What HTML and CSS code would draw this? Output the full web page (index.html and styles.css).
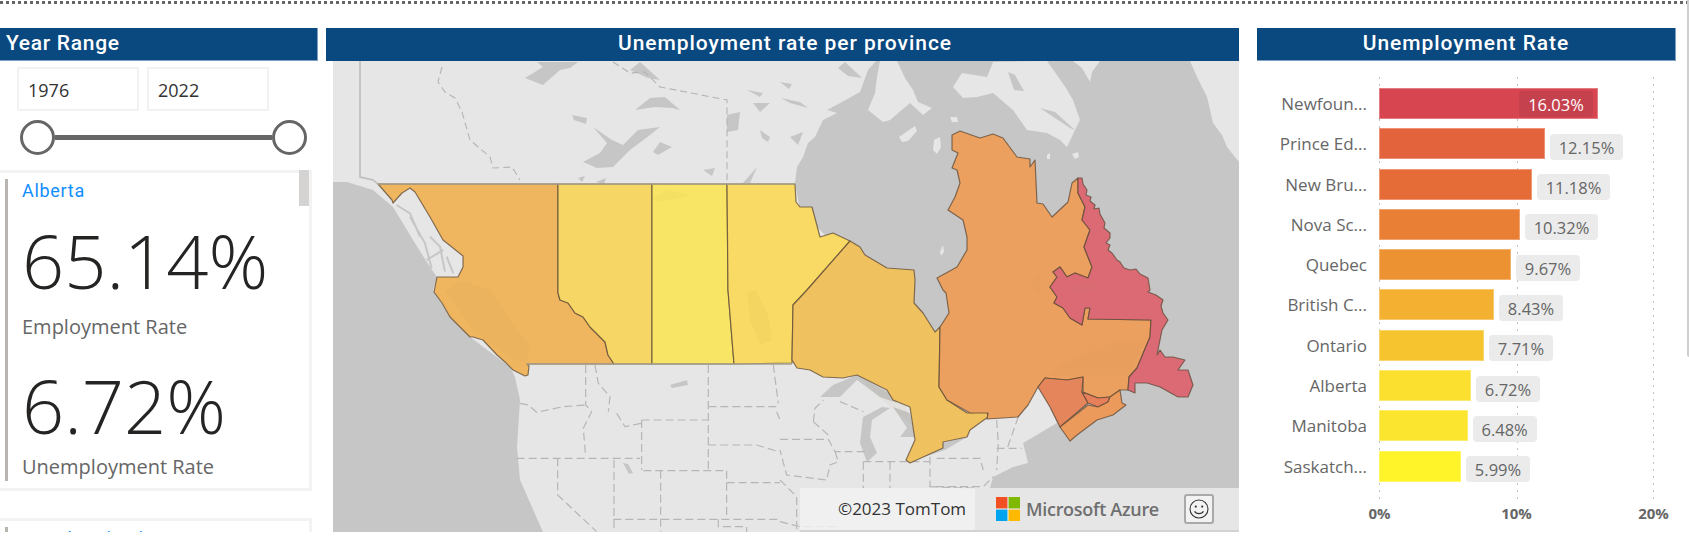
FILE: index.html
```html
<!DOCTYPE html>
<html lang="en">
<head>
<meta charset="utf-8">
<title>Unemployment dashboard</title>
<link rel="stylesheet" href="styles.css">
</head>
<body>
<div class="dots"></div>
<div class="page-scroll"></div>
<main class="dash">
  <section class="left">
    <h2 class="head head-left">Year Range</h2>
    <div class="inputs">
      <div class="yearbox">1976</div>
      <div class="yearbox">2022</div>
    </div>
    <div class="slider">
      <span class="knob"></span><span class="track"></span><span class="knob"></span>
    </div>
    <div class="cards">
      <article class="card">
        <div class="thumb"></div>
        <div class="card-in">
          <div class="prov">Alberta</div>
          <div class="big big-first">65.14%</div>
          <div class="cap">Employment Rate</div>
          <div class="big big-second">6.72%</div>
          <div class="cap">Unemployment Rate</div>
        </div>
      </article>
      <article class="card card-next">
        <div class="card-in">
          <div class="prov">British Columbia</div>
        </div>
      </article>
    </div>
  </section>

  <section class="mid">
    <h2 class="head head-mid">Unemployment rate per province</h2>
    <div class="map">
      <svg class="map-svg" viewBox="333 61 906 471" width="906" height="471" aria-hidden="true">
        <rect class="land" x="333" y="61" width="906" height="471"/>
        <!-- oceans -->
        <polygon class="water" points="333,182 347,182 373,190 393,207 413,240 430,267 437,277 433,290 450,317 470,337 510,367 515,377 520,400 517,447 520,480 543,532 333,532"/>
        <polygon class="water" points="795,183 797,167 803,157 808,143 815,137 823,120 837,113 827,110 842,102 860,92 868,70 876,61 1239,61 1239,532 985,532 990,488 993,477 1013,467 1028,463 1023,443 1057,423 1040,385 940,385 930,340 900,300 850,260 800,210"/>
        <!-- arctic land -->
        <polygon class="land" points="880,61 897,61 905,78 913,90 918,102 932,108 923,115 910,103 890,120 883,122 868,110 875,93 877,77"/>
        <polygon class="land" points="953,87 962,73 987,77 993,62 1047,61 1057,75 1066,88 1073,100 1080,120 1075,130 1067,147 1060,140 1047,133 1027,130 1013,110 993,93 977,97 963,98"/>
        <polygon class="land" points="1073,61 1100,61 1092,72 1090,82 1082,68"/>
        <polygon class="land" points="1190,61 1239,61 1239,162 1227,147 1222,135 1213,123 1207,97 1197,77"/>
        <polygon class="land" points="899,137 915,126 917,131 908,141 902,142"/>
        <polygon class="land" points="934,140 940,137 941,147 937,154 933,150"/>
        <polygon class="land" points="950,117 957,117 958,122 952,122"/>
        <polygon class="land" points="1047,155 1050,153 1050,159 1047,159"/>
        <polygon class="land" points="1072,154 1078,152 1079,157 1075,159"/>
        <polygon class="land" points="940,252 943,245 944,252 941,256"/>
        <polygon class="water" points="1008,72 1015,75 1024,91 1014,90"/>
        <polygon class="water" points="1040,108 1055,112 1075,130 1070,128"/>
        <polygon class="water" points="845,62 862,78 848,76 838,68"/>
        <polygon class="water" points="780,82 792,84 789,89"/>
        <polygon class="water" points="781,98 800,102 808,108 790,103"/>
        <polygon class="water" points="840,120 850,120 845,128"/>
        <polygon class="water" points="790,137 803,132 798,145"/>
        <!-- panhandle fjords -->
        <g class="fjord" transform="translate(330 20) scale(.3333)">
          <path d="M200 555L240 580L270 650M240 590L285 670L305 745M300 650L330 680L345 755M350 710L370 760M290 720L340 690"/>
        </g>
        <!-- northern lakes -->
        <g class="water">
          <polygon points="525,78 543,67 537,62 578,62 570,68 560,70 543,85"/>
          <polygon points="583,162 600,153 607,143 593,127 612,140 623,145 638,130 660,127 650,135 630,150 613,167 597,168"/>
          <polygon points="572,115 587,118 586,124 574,120"/>
          <polygon points="635,110 650,98 665,97 680,110 672,108 655,107"/>
          <polygon points="727,115 740,112 738,130 727,132"/>
          <polygon points="653,152 660,142 672,147 658,155"/>
          <polygon points="747,90 763,93 760,97"/>
          <polygon points="753,103 770,103 760,112"/>
          <polygon points="760,130 770,137 768,142 762,138"/>
          <polygon points="743,183 757,167 750,183"/>
          <polygon points="703,170 715,168 712,176"/>
          <polygon points="640,62 660,80 648,78 630,70"/>
          <polygon points="578,178 585,176 582,182"/>
          <polygon points="596,182 606,178 604,184"/>
          <!-- great lakes -->
          <polygon points="820,397 833,385 857,375 890,393 897,403 880,397 857,380 840,397"/>
          <polygon points="882,407 863,417 860,443 867,462 877,453 870,437 872,420 890,408"/>
          <polygon points="893,407 910,413 915,437 900,437 907,428"/>
          <polygon points="915,460 943,443 967,437 945,450"/>
          <polygon points="623,463 628,464 633,473 629,474"/>
          <polygon points="670,385 687,380 688,385 672,388"/>
        </g>
        <!-- dashed territory and state lines -->
        <path class="solid-b" d="M360 61V177L373 180L378 184"/>
        <path class="dash-b" d="M442 67L438 82L445 92L455 98L462 112L470 140L490 157L493 168L512 167L520 180M613 62L630 73L645 72L660 87L727 100V183"/>
        <g class="dash-s" transform="translate(330 280) scale(.3333)">
          <path d="M767 255V375L785 395L760 445L767 530M570 370L595 375L620 397L700 380L767 375M560 535H930M795 255L805 310L840 350L835 395M860 400L885 440L935 430M935 420H1135M935 420V570M940 572H1190M992 572V755M1135 255V572M1135 380H1350M1135 495H1280L1345 515M1190 572V715M1190 608H1350M850 718H1350M852 540V755M683 535V645L800 755M1330 255L1345 370M1340 395L1350 420M1165 718V740H1250V755"/>
        </g>
        <g class="dash-s" transform="translate(780 280) scale(.3333)">
          <path d="M0 478H145L165 515H255M165 515L175 545L150 555L140 600L20 585L0 510M250 545H450M250 545V625M330 545V625M450 530V620H610L640 590M470 535H600L610 570M650 420L655 490L650 570M715 410L680 510M650 505H725M100 425L105 385L130 360M180 365L250 395M100 425L145 465M0 600L50 650V755M0 725L60 740H180M450 620L590 625"/>
        </g>
        <!-- provinces -->
        <polygon class="pv bc" points="378,184 558,184 558,293 560,300 568,303 575,313 583,317 590,327 605,342 608,355 614,364 527,364 529,366 528,375 525,376 513,370 505,362 497,355 483,340 473,337 470,337 450,317 442,303 434,292 437,277 458,277 463,267 463,256 443,240 430,217 415,192 410,188 402,193 393,203 392,200"/>
        <polygon class="pv ab" points="558,184 652,184 652,364 614,364 608,355 605,342 590,327 583,317 575,313 568,303 560,300 558,293"/>
        <polygon class="pv sk" points="652,184 727,184 728,290 734,364 652,364"/>
        <polygon class="pv mb" points="727,184 795,184 796,202 800,207 812,207 820,237 833,233 850,241 807,290 793,305 792,363 734,364 728,290"/>
        <polygon class="pv on" points="850,241 860,247 865,255 887,268 914,270 915,280 914,303 923,313 935,332 940,327 939,387 947,400 967,413 987,412 988,417 970,430 967,437 943,442 943,448 910,463 906,460 915,440 910,407 893,400 887,390 857,375 843,378 823,377 810,370 797,368 792,360 793,305 807,290"/>
        <polygon class="pv qc" points="952,135 960,131 980,138 993,134 1003,138 1017,157 1030,159 1030,167 1035,160 1037,203 1043,204 1052,217 1068,202 1072,183 1078,178 1078,193 1085,207 1082,220 1090,230 1084,247 1088,257 1092,267 1088,278 1075,273 1067,277 1060,267 1053,272 1057,277 1050,287 1057,297 1054,303 1063,308 1070,318 1082,325 1085,308 1090,308 1088,319 1151,320 1150,337 1137,368 1129,377 1128,390 1120,390 1110,397 1098,398 1083,392 1083,377 1067,380 1045,378 1038,387 1028,405 1018,417 987,419 988,413 970,413 947,400 939,387 940,327 949,313 946,293 943,290 937,278 957,267 967,250 967,237 963,220 948,210 955,197 960,183 957,170 952,168 958,153 952,150"/>
        <polygon class="pv nl" points="1078,178 1082,178 1083,184 1087,190 1086,195 1091,197 1090,201 1095,205 1094,209 1099,208 1100,214 1105,223 1104,228 1110,233 1110,238 1106,243 1110,245 1108,250 1112,253 1117,260 1120,262 1124,268 1130,270 1136,269 1140,274 1148,278 1150,290 1148,292 1156,295 1163,300 1161,306 1163,313 1168,320 1162,330 1160,340 1157,355 1160,350 1165,357 1173,357 1185,360 1178,370 1188,370 1193,385 1188,397 1178,397 1160,387 1147,383 1135,383 1135,393 1128,390 1129,377 1137,368 1150,337 1151,320 1088,319 1090,308 1085,308 1082,325 1070,318 1063,308 1054,303 1057,297 1050,287 1057,277 1053,272 1060,267 1067,277 1075,273 1088,278 1092,267 1088,257 1084,247 1090,230 1082,220 1085,207 1078,193"/>
        <polygon class="pv nb" points="1045,378 1067,380 1083,377 1082,392 1088,403 1060,427 1050,407 1038,387"/>
        <polygon class="pv pe" points="1082,392 1098,398 1110,397 1108,402 1098,407 1088,403"/>
        <polygon class="pv ns" points="1120,390 1122,403 1126,405 1113,415 1097,420 1077,435 1070,441 1060,427 1088,405 1098,407 1108,402 1110,397"/>
        <!-- terrain tint on provinces -->
        <g class="tint">
          <polygon points="445,292 475,332 512,360 527,362 529,345 510,320 490,290 460,280"/>
          <polygon points="652,198 668,190 692,195 660,202"/>
          <polygon points="747,292 756,290 768,315 772,340 760,345 750,320"/>
          <polygon points="1030,395 1060,365 1120,340 1145,340 1130,375 1083,375 1045,376"/>
          <polygon points="1075,285 1095,282 1095,290 1075,292"/>
          <polygon points="860,378 887,392 905,405 912,425 880,398"/>
          <polygon points="1030,285 1040,275 1040,295"/>
        </g>
        <line class="parallel" x1="378" y1="184" x2="795" y2="184"/>
        <line class="parallel" x1="527" y1="364" x2="792" y2="364"/>
      </svg>
      <div class="attr">
        <div class="attr-copy">©2023 TomTom</div>
        <div class="attr-brand">
          <svg class="ms" viewBox="0 0 24 24" width="24" height="24" aria-hidden="true">
            <rect class="ms-r" x="0" y="0" width="11.4" height="11.4"/>
            <rect class="ms-g" x="12.6" y="0" width="11.4" height="11.4"/>
            <rect class="ms-b" x="0" y="12.6" width="11.4" height="11.4"/>
            <rect class="ms-y" x="12.6" y="12.6" width="11.4" height="11.4"/>
          </svg>
          <span class="azure">Microsoft Azure</span>
          <span class="smile">
            <svg viewBox="0 0 20 20" width="20" height="20" aria-hidden="true">
              <circle cx="10" cy="10" r="9" fill="none" stroke="#333" stroke-width="1.1"/>
              <circle cx="6.8" cy="7.6" r="1.1" fill="#333"/>
              <circle cx="13.2" cy="7.6" r="1.1" fill="#333"/>
              <path d="M5.6 12.2C7 15.4 13 15.4 14.4 12.2" fill="none" stroke="#333" stroke-width="1.1"/>
            </svg>
          </span>
        </div>
      </div>
    </div>
  </section>

  <section class="right">
    <h2 class="head head-right">Unemployment Rate</h2>
    <div class="chart">
      <span class="grid g0"></span><span class="grid g1"></span><span class="grid g2"></span>
      <div class="rows">
        <div class="row"><div class="lab">Newfoun...</div><div class="bar c1" style="width:219px"><span class="pill pill-in">16.03%</span></div></div>
        <div class="row"><div class="lab">Prince Ed...</div><div class="bar c2" style="width:166px"></div><span class="pill">12.15%</span></div>
        <div class="row"><div class="lab">New Bru...</div><div class="bar c3" style="width:153px"></div><span class="pill">11.18%</span></div>
        <div class="row"><div class="lab">Nova Sc...</div><div class="bar c4" style="width:141px"></div><span class="pill">10.32%</span></div>
        <div class="row"><div class="lab">Quebec</div><div class="bar c5" style="width:132px"></div><span class="pill pill-s">9.67%</span></div>
        <div class="row"><div class="lab">British C...</div><div class="bar c6" style="width:115px"></div><span class="pill pill-s">8.43%</span></div>
        <div class="row"><div class="lab">Ontario</div><div class="bar c7" style="width:105px"></div><span class="pill pill-s">7.71%</span></div>
        <div class="row"><div class="lab">Alberta</div><div class="bar c8" style="width:92px"></div><span class="pill pill-s">6.72%</span></div>
        <div class="row"><div class="lab">Manitoba</div><div class="bar c9" style="width:88.6px"></div><span class="pill pill-s">6.48%</span></div>
        <div class="row"><div class="lab">Saskatch...</div><div class="bar c10" style="width:82px"></div><span class="pill pill-s">5.99%</span></div>
      </div>
      <div class="axis"><span>0%</span><span>10%</span><span>20%</span></div>
    </div>
  </section>
</main>
</body>
</html>
```
FILE: styles.css
```css
* { box-sizing: border-box; }
html, body { margin: 0; padding: 0; height: 545px; overflow: hidden; background: #fff; }
body { position: relative; font-family: "Open Sans", "Liberation Sans", sans-serif; color: #333; }

.dots {
  height: 3px;
  margin-top: 1px;
  background: repeating-linear-gradient(90deg, #666 0 3px, transparent 3px 6px);
}
.page-scroll {
  position: absolute; right: 0; top: 0; width: 2px; height: 357px;
  background: #cfcfcf; border-radius: 0 0 0 2px;
}
.dash { display: flex; margin-top: 24px; height: 504px; align-items: flex-start; }

.head {
  margin: 0; height: 33px; background: #0a4880; color: #fff;
  font: 500 21px/31px Roboto, "Liberation Sans", sans-serif;
  letter-spacing: 0.95px;
}
.head-left { padding-left: 6px; letter-spacing: .7px; border-right: 1px solid #7d9fc4; border-bottom: 1px solid #7d9fc4; }
.head-mid { text-align: center; padding-left: 5px; }
.head-right { text-align: center; border-right: 1px solid #7d9fc4; border-bottom: 1px solid #7d9fc4; }

/* left column */
.left { width: 318px; height: 504px; overflow: hidden; flex: none; }
.inputs { display: flex; gap: 8px; padding: 6px 0 0 17px; }
.yearbox {
  width: 122px; height: 44px; border: 2px solid #f2f2f2;
  padding-left: 9px; font-size: 18px; line-height: 42px; color: #333;
}
.slider { display: flex; align-items: center; padding-left: 20px; margin-top: 9px; width: 307px; }
.knob { width: 35px; height: 35px; border-radius: 50%; border: 3px solid #666; background: #fff; flex: none; }
.track { flex: 1; height: 5px; background: #666; }
.cards { margin-top: 15px; width: 312px; }
.card {
  position: relative; height: 321px;
  border: 3px solid #f3f3f3; border-left: 0;
  padding: 6px 0 0 5px;
}
.card-next { margin-top: 27px; }
.thumb { position: absolute; right: 0; top: -3px; width: 10px; height: 36px; background: #d5d3d1; }
.card-in { border-left: 3px solid #b9b6b2; padding-left: 14px; height: 302px; }
.prov { font: 400 18px/24px Roboto, "Liberation Sans", sans-serif; letter-spacing: .7px; color: #118dff; }
.big { font-family: "Open Sans", sans-serif; font-weight: 300; font-size: 74px; line-height: 82px; color: #252423; white-space: nowrap; }
.big-first { margin: 17px 0 12px; }
.big-second { margin: 25px 0 7px; }
.cap { font-size: 20px; line-height: 26px; color: #666; white-space: nowrap; }

/* map */
.mid { width: 913px; margin-left: 8px; flex: none; }
.map { position: relative; margin-left: 7px; width: 906px; height: 471px; overflow: hidden; }
.map-svg { display: block; }
.land { fill: #e6e6e6; }
.water, .water polygon { fill: #c6c6c6; }
.fjord { fill: none; stroke: #c6c6c6; stroke-width: 6; }
.solid-b { fill: none; stroke: #bdbdbd; stroke-width: 1.6; }
.dash-b { fill: none; stroke: #b4b4b4; stroke-width: 1.1; stroke-dasharray: 7 4; }
.dash-s { fill: none; stroke: #b6b6b6; stroke-width: 3.6; stroke-dasharray: 24 12; }
.pv { stroke: #5f4a35; stroke-opacity: .75; stroke-width: 1.2; stroke-linejoin: round; }
.bc { fill: #efb65f; }
.ab { fill: #f6d765; }
.sk { fill: #f8e565; }
.mb { fill: #f9da64; }
.on { fill: #f0c25f; }
.qc { fill: #eba05f; }
.nl { fill: #dc6a75; }
.nb { fill: #e5855b; }
.pe { fill: #e77f5a; }
.ns { fill: #ec9a5b; }
.tint polygon { fill: #b5843a; opacity: .05; }
.parallel { stroke: #a9a28a; stroke-width: 1.3; }

.attr {
  position: absolute; left: 467px; right: 0; bottom: 0; height: 44px;
  display: flex; border-bottom: 2px solid #d3d3d3;
}
.attr-copy {
  width: 175px; background: rgba(241,241,241,.82); padding-left: 38px;
  font-size: 17px; line-height: 42px; color: #333; white-space: nowrap;
}
.attr-brand { flex: 1; background: #e6e6e6; display: flex; align-items: center; padding: 0 25px 0 21px; }
.ms { flex: none; }
.ms-r { fill: #f25022; } .ms-g { fill: #7fba00; } .ms-b { fill: #00a4ef; } .ms-y { fill: #ffb900; }
.azure { margin-left: 6px; font: 600 18px/24px "Open Sans", sans-serif; color: #6f6f6f; white-space: nowrap; letter-spacing: -.3px; }
.smile {
  margin-left: auto; width: 30px; height: 30px; border: 2px solid #a9a9a9; border-radius: 3px;
  background: #f2f2f2; display: flex; align-items: center; justify-content: center; flex: none;
}

/* chart */
.right { width: 419px; margin-left: 18px; flex: none; }
.chart { position: relative; padding-top: 27px; }
.grid {
  position: absolute; top: 16px; height: 423px; width: 1px;
  background: repeating-linear-gradient(180deg, #c2c2c2 0 2px, transparent 2px 7px);
}
.g0 { left: 122px; } .g1 { left: 260px; } .g2 { left: 396px; }
.rows { position: relative; display: flex; flex-direction: column; gap: 9.3px; }
.row { display: flex; align-items: center; height: 31px; }
.lab { width: 110px; margin-right: 12px; text-align: right; font-size: 17px; line-height: 31px; color: #666; white-space: nowrap; }
.bar { position: relative; height: 31px; border: 1px solid rgba(255,255,255,.3); flex: none; }
.pill {
  display: block; margin: 6px 0 0 5px; width: 73px; height: 26px; border-radius: 4px;
  background: #ebebeb; color: #666; font-size: 16.5px; line-height: 28px; text-align: center; flex: none;
}
.pill-s { width: 64px; }
.pill-in { position: absolute; left: 139px; top: 2px; margin: 0; width: 74px; background: #c6414e; color: #fff; }
.c1 { background: #d64550; } .c2 { background: #e3633d; } .c3 { background: #e56b37; }
.c4 { background: #e97f35; } .c5 { background: #ed9233; } .c6 { background: #f4b131; }
.c7 { background: #f5c42f; } .c8 { background: #fbe02f; } .c9 { background: #fce52e; } .c10 { background: #fff32a; }
.axis { display: flex; margin: 21px 0 0 54px; }
.axis span { width: 137px; flex: none; text-align: center; font-size: 15px; font-weight: 700; line-height: 20px; color: #666; }
```
